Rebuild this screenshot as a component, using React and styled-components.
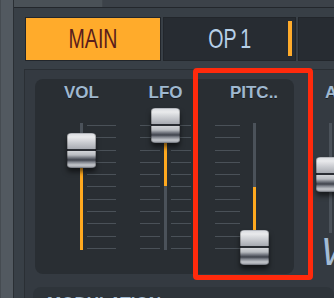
import React from 'react'
import styled, { createGlobalStyle } from 'styled-components'

const GlobalStyle = createGlobalStyle`
  html, body {
    margin: 0;
    padding: 0;
    background: #383f46;
  }
  body {
    font-family: "Liberation Sans", Arial, sans-serif;
  }
`

const AREA = 127
const MID = AREA / 2

const Root = styled.div`
  position: relative;
  width: 334px;
  height: 298px;
  overflow: hidden;
  display: flex;
  background: #383f46;
`

const SideStrip = styled.div`
  flex: none;
  width: 14px;
  box-sizing: border-box;
  background: #525960;
  border-left: 1px solid #454b51;
  border-right: 1px solid #2a2f34;
`

const Main = styled.div`
  flex: 1;
  display: flex;
  flex-direction: column;
  min-width: 0;
`

const TopBar = styled.div`
  height: 7px;
  flex: none;
  display: flex;
  background: #3c4249;
  border-bottom: 1px solid #23272c;
`

const TopBarLit = styled.div`
  width: 88px;
  background: #4a5157;
  border-right: 1px solid #40464c;
`

const Tabs = styled.div`
  display: flex;
  gap: 2px;
  padding: 9px 0 0 11px;
`

const Tab = styled.div`
  position: relative;
  flex: none;
  width: ${p => p.$w}px;
  height: 44px;
  box-sizing: border-box;
  border: 1px solid #22262b;
  background: ${p => (p.$active ? '#ffab2b' : '#272c32')};
  color: ${p => (p.$active ? '#5a1d1c' : '#b7d0e8')};
  display: flex;
  align-items: center;
  justify-content: center;
`

const TabText = styled.span`
  display: inline-block;
  font-size: 28px;
  line-height: 1;
  word-spacing: -2px;
  transform: scaleX(0.7);
`

const TabMark = styled.div`
  position: absolute;
  right: 3px;
  top: 3px;
  bottom: 4px;
  width: 4px;
  background: #ffab2b;
`

const Content = styled.div`
  flex: 1;
  margin: 8px 0 0 10px;
  border-left: 1px solid #2a2f34;
  border-top: 1px solid #2a2f34;
  background: #343a41;
  padding: 9px 0 0 10px;
`

const Row = styled.div`
  display: flex;
  gap: 11px;
`

const SliderPanel = styled.div`
  flex: none;
  width: 259px;
  height: 195px;
  box-sizing: border-box;
  border-radius: 8px;
  background: #292e33;
  padding: 4px 0 0 12px;
  display: flex;
  gap: 24px;
`

const SidePanel = styled.div`
  flex: none;
  width: 60px;
  padding: 4px 0 0 20px;
  display: flex;
  flex-direction: column;
`

const Column = styled.div`
  display: flex;
  flex-direction: column;
  align-items: ${p => (p.$start ? 'flex-start' : 'center')};
`

const Label = styled.div`
  font-size: 17px;
  font-weight: bold;
  line-height: 20px;
  color: #9fb8d0;
  text-shadow: 0 1px 0 rgba(0, 0, 0, 0.45);
  white-space: nowrap;
`

const SliderArea = styled.div`
  margin-top: 20px;
  height: ${p => p.$h}px;
  display: grid;
  grid-template-columns: ${p => p.$left}px 3px ${p => p.$right}px;
  column-gap: ${p => p.$gap}px;
`

const Ticks = styled.div`
  display: flex;
  flex-direction: column;
  justify-content: space-between;
  padding: 2px 0 1px;
`

const Tick = styled.div`
  height: 1px;
  background: #4a5158;
`

const Track = styled.div`
  position: relative;
  background: #4b525a;
`

const Fill = styled.div`
  position: absolute;
  left: 0;
  width: 3px;
  background: #ffa91f;
`

const Thumb = styled.div`
  position: absolute;
  left: -13px;
  width: 29px;
  height: 35px;
  border-radius: 4px;
  z-index: 1;
  background: linear-gradient(
    to bottom,
    #8f9299 0px,
    #dcdee2 1px,
    #e9eaec 4px,
    #c7c9ce 10px,
    #a7aab1 16px,
    #2a2d33 16.5px,
    #2a2d33 17.5px,
    #d2d4d8 18px,
    #b9bcc1 22px,
    #6b6f78 25px,
    #3e424b 27px,
    #7d818a 29px,
    #c4c7cc 32px,
    #a0a3aa 34px,
    #5c6068 35px
  );
  box-shadow: inset 1px 0 0 rgba(0, 0, 0, 0.25), inset -1px 0 0 rgba(0, 0, 0, 0.25),
    0 4px 5px rgba(0, 0, 0, 0.55);
`

const BigWord = styled.div`
  font-size: 38px;
  line-height: 38px;
  font-style: italic;
  color: #a3bcd5;
  white-space: nowrap;
  margin-left: -4px;
`

const LowerPanel = styled.div`
  margin: 13px 0 0 -2px;
  height: 40px;
  border-radius: 8px;
  background: #2e343a;
  padding: 7px 0 0 14px;
`

const Highlight = styled.div`
  position: absolute;
  left: 193px;
  top: 68px;
  width: 120px;
  height: 212px;
  box-sizing: border-box;
  border: 5px solid #ff2a0c;
  border-radius: 4px;
  pointer-events: none;
`

const TickList = () => (
  <Ticks>
    {Array.from({ length: 11 }, (_, i) => <Tick key={i} />)}
  </Ticks>
)

// value: 0..1 (thumb centre from bottom); fill: 'bottom' | 'center' | none
const Fader = ({ value, fill, side, gap, ticksLeft, ticksRight, h = AREA }) => {
  const c = (1 - value) * h
  let fillTop = 0
  let fillH = 0
  if (fill === 'bottom') {
    fillTop = c
    fillH = h - c
  } else if (fill === 'center') {
    fillTop = Math.min(c, MID)
    fillH = Math.abs(c - MID)
  }
  return (
    <SliderArea $h={h} $left={side[0]} $right={side[1]} $gap={gap}>
      {ticksLeft ? <TickList /> : <div />}
      <Track>
        {fill && <Fill style={{ top: fillTop, height: fillH }} />}
        <Thumb style={{ top: c - 17.5 }} />
      </Track>
      {ticksRight ? <TickList /> : <div />}
    </SliderArea>
  )
}

const App = () => (
  <>
    <GlobalStyle />
    <Root>
      <SideStrip />
      <Main>
        <TopBar>
          <TopBarLit />
        </TopBar>
        <Tabs>
          <Tab $w={136} $active>
            <TabText>MAIN</TabText>
          </Tab>
          <Tab $w={133}>
            <TabText>OP 1</TabText>
            <TabMark />
          </Tab>
          <Tab $w={60} />
        </Tabs>
        <Content>
          <Row>
            <SliderPanel>
              <Column>
                <Label>VOL</Label>
                <Fader value={0.783} fill="bottom" side={[29, 29]} gap={4} ticksRight />
              </Column>
              <Column>
                <Label>LFO</Label>
                <Fader value={0.984} fill="center" side={[20, 20]} gap={4} ticksLeft ticksRight />
              </Column>
              <Column>
                <Label>PITC..</Label>
                <Fader value={0.016} fill="center" side={[25, 24]} gap={13} ticksLeft />
              </Column>
            </SliderPanel>
            <SidePanel>
              <Column $start>
                <Label>AMP</Label>
                <Fader value={0.53} side={[4, 20]} gap={0} h={110} />
              </Column>
              <BigWord>WAVE</BigWord>
            </SidePanel>
          </Row>
          <LowerPanel>
            <Label>MODULATION</Label>
          </LowerPanel>
        </Content>
      </Main>
      <Highlight />
    </Root>
  </>
)

export default App
